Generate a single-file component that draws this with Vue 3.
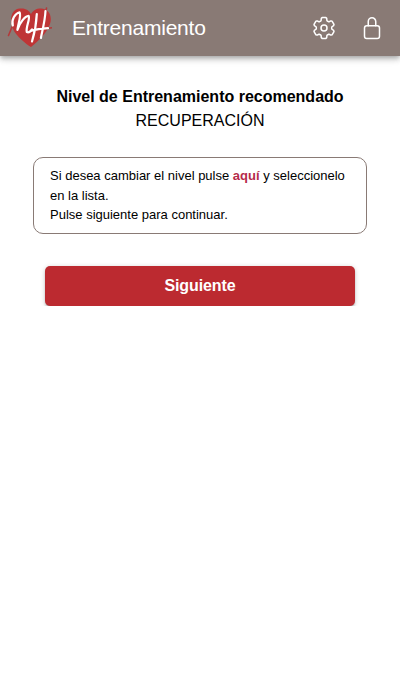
<script setup>
const title = 'Entrenamiento'
const level = 'RECUPERACIÓN'

// One gear tooth around the origin, repeated every 60 degrees.
const tooth = [[-3.3, -7], [-2.9, -7.5], [-2.7, -9.6], [-1.9, -10.4], [1.9, -10.4], [2.7, -9.6], [2.9, -7.5], [3.3, -7]]
const gear = Array.from({ length: 6 }, (_, i) => {
  const a = (i * Math.PI) / 3
  return tooth.map(([x, y]) =>
    `${(x * Math.cos(a) - y * Math.sin(a)).toFixed(2)} ${(x * Math.sin(a) + y * Math.cos(a)).toFixed(2)}`
  ).join('L')
}).reduce((d, p) => d + (d ? 'L' : 'M') + p, '') + 'Z'
</script>

<template>
  <div class="page">
    <header class="toolbar">
      <svg class="logo" viewBox="0 0 48 48" aria-hidden="true">
        <path class="heart" d="M27 43C22 40 12 32 9 25C5 16 7 5 16 4.5C22 4 25 6.5 27 10C29 6.5 32 4.5 37 4.5C45 5 48.5 12 46 20C43 29 34 37 27 43Z" />
        <path class="swash" d="M8 23L4.5 31.5M42.5 4L41.5 10M44 24.2L48 23.8" />
        <path class="mark" d="M8.8 21.5C7 16 11 9.5 15.6 8.3C17.5 11 14.3 19 13.4 26C15.5 19 21 12 24.6 11.8C26.5 15 21.5 23 22.8 28C24.5 28.8 26.5 27.5 28 25.5M32.8 10C32.3 20 30.3 30 28 37.5M41.5 7C41 17 38.2 27 36.9 34M27.5 26.8C33 25 39 24.5 44 24.2" />
      </svg>
      <h1>{{ title }}</h1>
      <nav class="actions">
        <svg viewBox="-12 -12 24 24" aria-hidden="true">
          <path :d="gear" />
          <circle r="3" />
        </svg>
        <svg viewBox="0 0 24 24" aria-hidden="true">
          <path d="M15.75 9.75V5.5a3.75 3.75 0 0 0-7.5 0v4.25" />
          <rect x="4.5" y="9.75" width="15" height="12.75" rx="2.25" />
        </svg>
      </nav>
    </header>
    <main>
      <h2>Nivel de Entrenamiento recomendado</h2>
      <p class="level">{{ level }}</p>
      <div class="notice">
        Si desea cambiar el nivel pulse <a>aquí</a> y seleccionelo en la lista.<br />Pulse siguiente para continuar.
      </div>
      <button type="button">Siguiente</button>
    </main>
  </div>
</template>

<style>
body {
  background: #fff;
}
</style>

<style scoped>
.page {
  font-family: "Liberation Sans", Arial, sans-serif;
  color: #000;
}
.toolbar {
  display: flex;
  align-items: center;
  box-sizing: border-box;
  height: 56px;
  padding: 0 16px 0 4px;
  background: #897a75;
  box-shadow: 0 2px 4px -1px rgba(0, 0, 0, 0.2), 0 4px 5px rgba(0, 0, 0, 0.14), 0 1px 10px rgba(0, 0, 0, 0.12);
}
.logo {
  width: 48px;
  height: 48px;
}
.heart {
  fill: #bf3536;
}
.swash,
.mark {
  fill: none;
  stroke-linecap: round;
  stroke-linejoin: round;
}
.swash {
  stroke: #b43a3b;
  stroke-width: 1.6;
}
.mark {
  stroke: #fff;
  stroke-width: 2.2;
}
h1 {
  flex: 1;
  margin: 0 0 0 20px;
  color: #fff;
  font-size: 21px;
  font-weight: 400;
  letter-spacing: -0.23px;
  line-height: 28px;
}
.actions {
  display: flex;
  gap: 24px;
}
.actions svg {
  width: 24px;
  height: 24px;
  fill: none;
  stroke: #fff;
  stroke-width: 1.5;
  stroke-linecap: round;
  stroke-linejoin: round;
}
main {
  padding: 29px 33px 0;
}
h2,
.level {
  margin: 0;
  font-size: 16px;
  line-height: 24px;
  text-align: center;
}
.level {
  font-weight: 400;
}
.notice {
  box-sizing: border-box;
  height: 77px;
  margin-top: 24px;
  padding: 8px 16px;
  border: 1px solid #897a75;
  border-radius: 10px;
  font-size: 13px;
  line-height: 19.5px;
}
.notice a {
  color: #b52b4a;
  font-weight: 700;
}
button {
  display: block;
  width: 310px;
  height: 40px;
  margin: 32px auto 0;
  padding: 0;
  border: 0;
  border-radius: 5px;
  background: #bc2a30;
  box-shadow: 0 3px 1px -2px rgba(0, 0, 0, 0.2), 0 2px 2px rgba(0, 0, 0, 0.14), 0 1px 5px rgba(0, 0, 0, 0.2);
  color: #fff;
  font: 700 16px/40px "Liberation Sans", Arial, sans-serif;
  letter-spacing: -0.1px;
}
</style>
